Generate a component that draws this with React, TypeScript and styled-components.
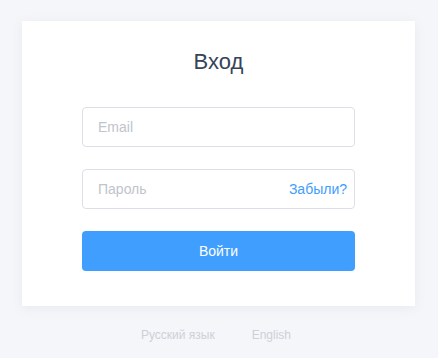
import React, { useState } from 'react';
import styled, { createGlobalStyle } from 'styled-components';

const GlobalStyle = createGlobalStyle`
  html, body {
    margin: 0;
    padding: 0;
    background: #f5f6f9;
    font-family: 'Liberation Sans', Arial, sans-serif;
  }
`;

const Page = styled.div`
  display: flex;
  flex-direction: column;
  align-items: center;
  padding: 21px 23px 0 22px;
`;

const Card = styled.div`
  align-self: stretch;
  height: 285px;
  box-sizing: border-box;
  background: #fff;
  box-shadow: 0 2px 10px rgba(140, 150, 180, 0.12);
  display: flex;
  flex-direction: column;
  align-items: center;
  padding-top: 26px;
`;

const Title = styled.h2`
  margin: 0 0 30px;
  font-size: 22px;
  font-weight: 400;
  line-height: 30px;
  color: #364458;
`;

const Form = styled.form`
  width: 273px;
  display: flex;
  flex-direction: column;
  gap: 22px;
`;

const Field = styled.div`
  position: relative;
  height: 40px;
  box-sizing: border-box;
  border: 1px solid #dcdfe6;
  border-radius: 4px;
  display: flex;
  align-items: center;
  background: #fff;
`;

const Input = styled.input`
  flex: 1;
  min-width: 0;
  height: 100%;
  border: 0;
  outline: none;
  background: transparent;
  padding: 0 15px;
  font-family: inherit;
  font-size: 14px;
  color: #606266;

  &::placeholder {
    color: #c0c4cc;
  }
`;

const Forgot = styled.a`
  padding-right: 7px;
  font-size: 14px;
  color: #409eff;
  text-decoration: none;
  cursor: pointer;
`;

const Submit = styled.button`
  height: 40px;
  border: 0;
  border-radius: 4px;
  background: #409eff;
  color: #fff;
  font-family: inherit;
  font-size: 14px;
  cursor: pointer;
`;

const Langs = styled.div`
  display: flex;
  gap: 37px;
  margin: 22px 5px 0 0;
  font-size: 12px;
  color: #cdd0d8;
`;

const Lang = styled.span`
  cursor: pointer;
`;

export default function App() {
  const [email, setEmail] = useState('');
  const [password, setPassword] = useState('');

  return (
    <>
      <GlobalStyle />
      <Page>
        <Card>
          <Title>Вход</Title>
          <Form onSubmit={(e) => e.preventDefault()}>
            <Field>
              <Input
                type="text"
                placeholder="Email"
                value={email}
                onChange={(e) => setEmail(e.target.value)}
              />
            </Field>
            <Field>
              <Input
                type="password"
                placeholder="Пароль"
                value={password}
                onChange={(e) => setPassword(e.target.value)}
              />
              <Forgot>Забыли?</Forgot>
            </Field>
            <Submit type="submit">Войти</Submit>
          </Form>
        </Card>
        <Langs>
          <Lang>Русский язык</Lang>
          <Lang>English</Lang>
        </Langs>
      </Page>
    </>
  );
}
